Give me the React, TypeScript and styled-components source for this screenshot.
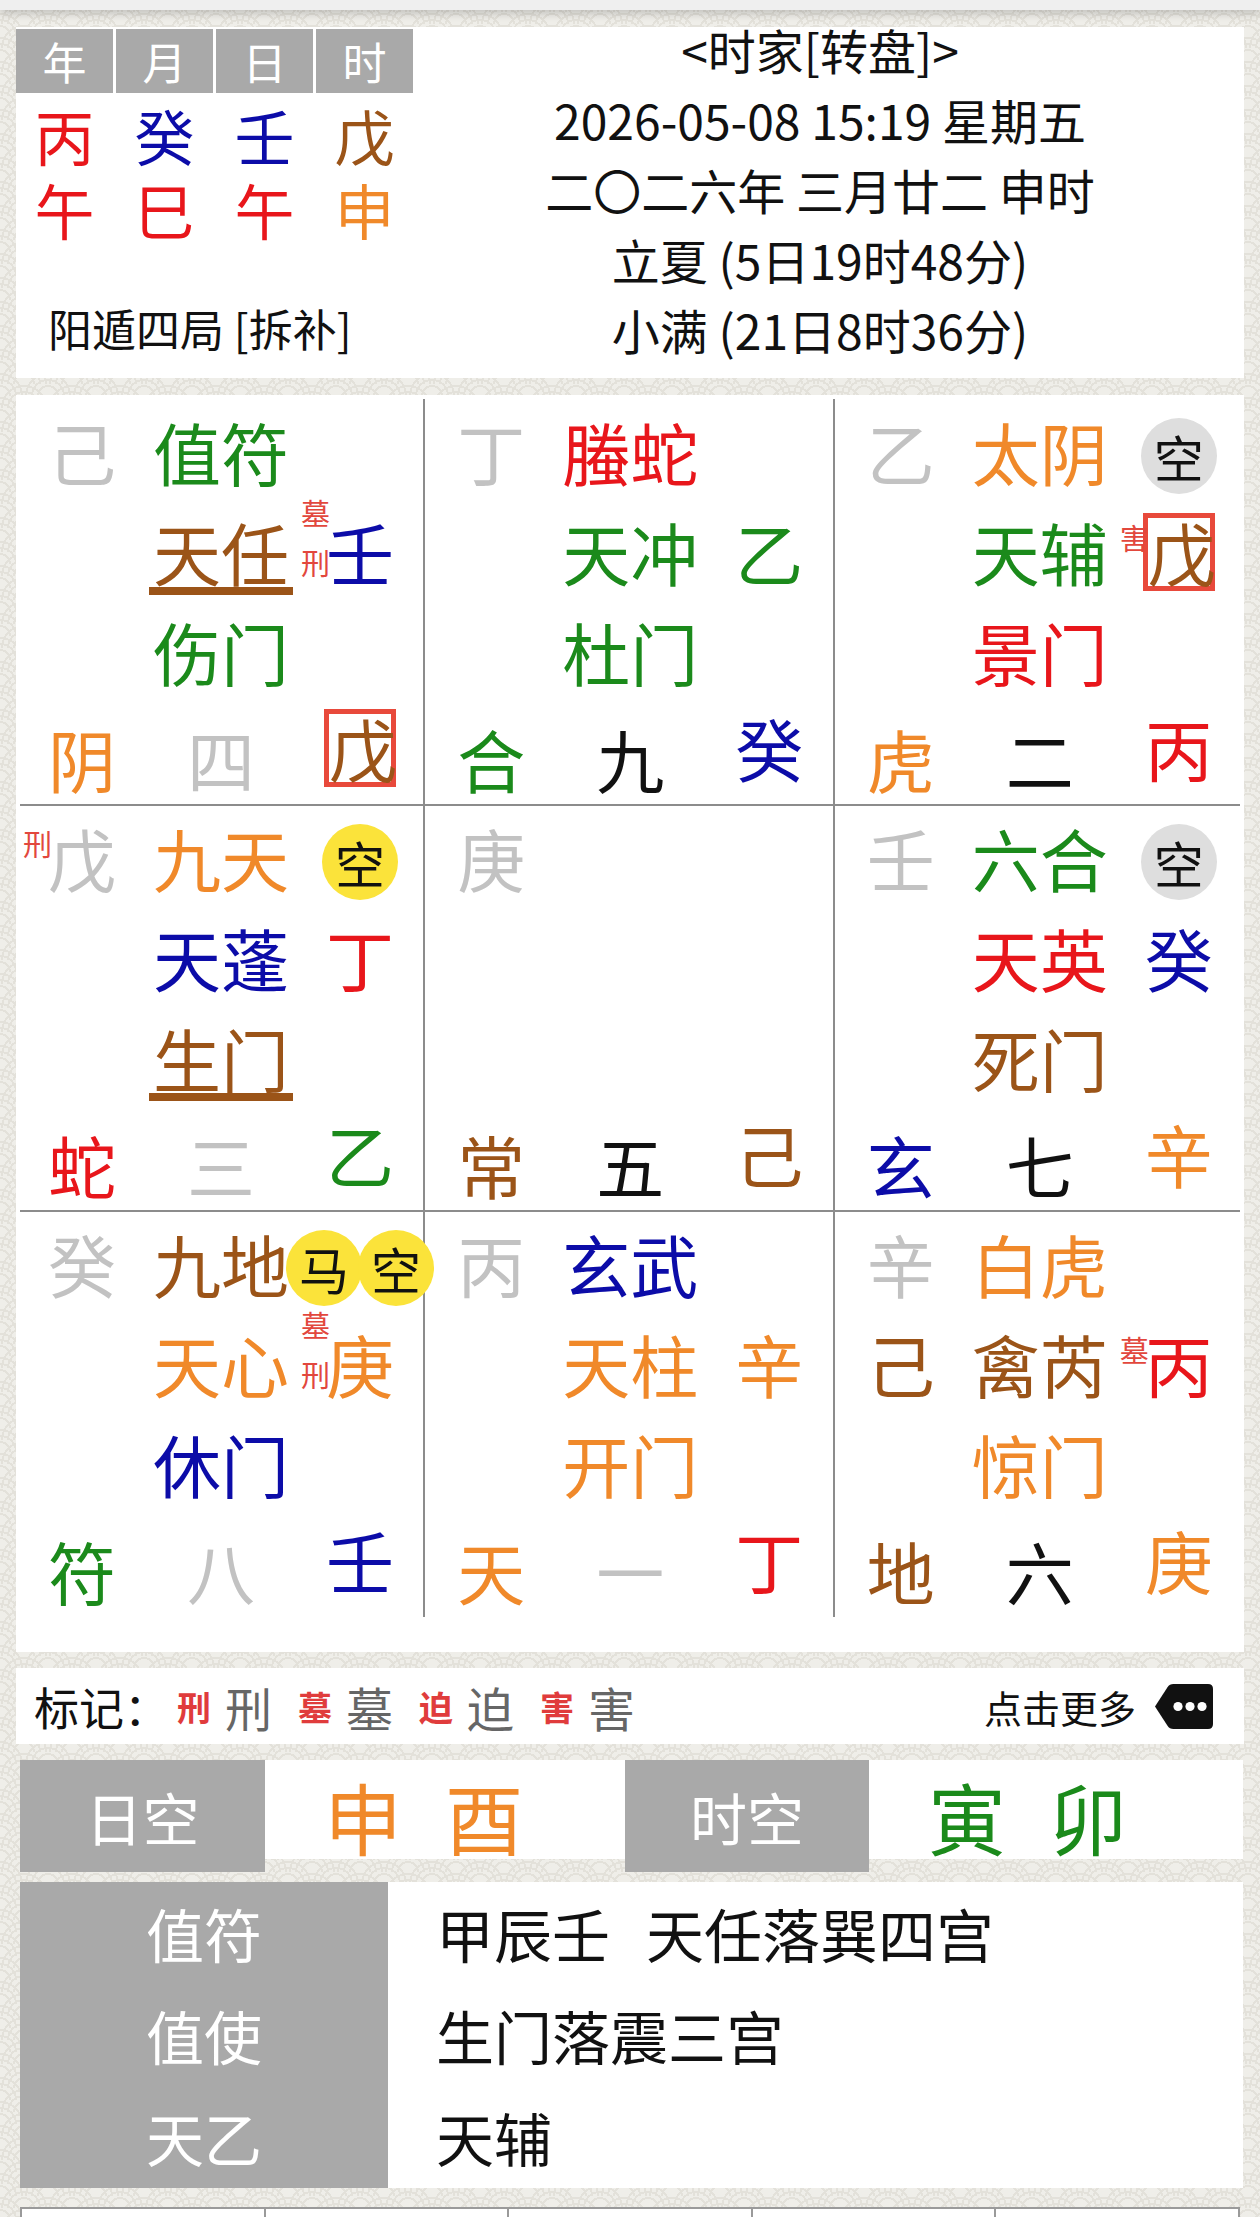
import React from "react";
import styled, { createGlobalStyle, css } from "styled-components";

const C = {
  green: "#1b8a1b",
  red: "#e8161b",
  blue: "#0c0ca8",
  brown: "#9b5418",
  orange: "#f0892a",
  gray: "#c2c2c2",
  black: "#111111",
  mark: "#e2473d",
};

type Tone = keyof typeof C;

const GlobalStyle = createGlobalStyle`
  html, body { margin: 0; padding: 0; }
  body {
    font-family: "Noto Sans CJK SC", "Noto Sans", sans-serif;
    color: #111;
    background-color: #efeee9;
    background-image:
      radial-gradient(circle at 50% 100%, transparent 0 9px, #e3e1da 9px 11px, transparent 11px 15px, #e3e1da 15px 17px, transparent 17px 21px, #e3e1da 21px 23px, transparent 23px),
      radial-gradient(circle at 50% 100%, transparent 0 9px, #e3e1da 9px 11px, transparent 11px 15px, #e3e1da 15px 17px, transparent 17px 21px, #e3e1da 21px 23px, transparent 23px);
    background-size: 48px 24px;
    background-position: 0 0, 24px 12px;
  }
`;

const TopBar = styled.div`
  height: 10px;
  background: #efefef;
  box-shadow: 0 3px 10px rgba(0, 0, 0, 0.22);
`;

const Page = styled.div`
  padding: 17px 16px 0;
`;

const Panel = styled.div`
  background: #ffffff;
`;

/* ---------- header ---------- */

const HeaderPanel = styled(Panel)`
  display: flex;
  height: 351px;
`;

const PillarBlock = styled.div`
  width: 400px;
`;

const PillarGrid = styled.div<{ $head?: boolean }>`
  display: grid;
  grid-template-columns: repeat(4, 97px);
  column-gap: 3px;
  ${({ $head }) =>
    $head
      ? css`
          margin-top: 2px;
          height: 59px;
          font-size: 44px;
        `
      : css`
          height: 74px;
          font-size: 60px;
        `}
`;

const HeadCell = styled.div`
  background: #a9a9a9;
  color: #fff;
  display: flex;
  align-items: center;
  justify-content: center;
`;

const PillarChar = styled.div<{ $c: Tone }>`
  display: flex;
  align-items: center;
  justify-content: center;
  line-height: 1;
  color: ${({ $c }) => C[$c]};
`;

const StemRows = styled.div`
  margin-top: 10px;
`;

const JuLine = styled.div`
  margin-top: 52px;
  padding-left: 32px;
  font-size: 44px;
  line-height: 60px;
`;

const DateBlock = styled.div`
  flex: 1;
  display: flex;
  flex-direction: column;
  align-items: center;
  gap: 26px;
  padding-right: 20px;
  font-size: 48px;
  line-height: 44px;
  white-space: nowrap;
`;

/* ---------- palace grid ---------- */

const BoardPanel = styled(Panel)`
  margin-top: 17px;
  padding: 4px 0 35px;
  display: grid;
  grid-template-columns: repeat(3, 1fr);
`;

const Palace = styled.div<{ $col: number; $row: number }>`
  position: relative;
  height: 406px;
  box-sizing: border-box;
  padding-top: 3px;
  ${({ $col }) => $col < 2 && css`border-right: 2px solid #8c8c8c;`}
  ${({ $row, $col }) =>
    $row < 2 &&
    css`
      &::after {
        content: "";
        position: absolute;
        bottom: -1px;
        height: 2px;
        left: ${$col === 0 ? "4px" : "0"};
        right: ${$col === 2 ? "4px" : "0"};
        background: #8c8c8c;
      }
    `}
`;

const PalaceRow = styled.div<{ $bottom?: boolean }>`
  display: grid;
  grid-template-columns: 68px 136px 68px;
  column-gap: 37px;
  padding-left: 32px;
  height: 100px;
  margin-top: ${({ $bottom }) => ($bottom ? "7px" : "0")};
`;

const Slot = styled.div<{ $c?: Tone; $lift?: boolean; $under?: boolean }>`
  position: relative;
  display: flex;
  align-items: center;
  justify-content: center;
  height: 100px;
  font-size: 68px;
  line-height: 1;
  white-space: nowrap;
  color: ${({ $c }) => ($c ? C[$c] : "inherit")};
  ${({ $lift }) => $lift && css`transform: translateY(-11px);`}
  ${({ $under }) =>
    $under &&
    css`
      &::after {
        content: "";
        position: absolute;
        left: -4px;
        right: -4px;
        top: 85px;
        height: 8px;
        background: ${C.brown};
      }
    `}
`;

const Boxed = styled.span`
  display: block;
  width: 72px;
  height: 78px;
  box-sizing: border-box;
  border: 5px solid #e8493b;
  line-height: 68px;
  text-align: center;
`;

const Marks = styled.div`
  position: absolute;
  right: calc(100% - 4px);
  top: 35px;
  transform: translateY(-50%);
  display: flex;
  flex-direction: column;
  gap: 22px;
  font-size: 29px;
  line-height: 28px;
  color: ${C.mark};
`;

const Badges = styled.div`
  display: flex;
  justify-content: center;
  width: 100%;
  transform: translateY(4px);
`;

const Badge = styled.div<{ $yellow?: boolean }>`
  flex-shrink: 0;
  width: 76px;
  height: 76px;
  border-radius: 50%;
  background: ${({ $yellow }) => ($yellow ? "#fbe33a" : "#dedede")};
  color: #111;
  font-size: 50px;
  line-height: 76px;
  text-align: center;
  & + & {
    margin-left: -4px;
  }
`;

/* ---------- marks legend ---------- */

const LegendPanel = styled(Panel)`
  margin-top: 16px;
  height: 76px;
  display: flex;
  align-items: center;
  justify-content: space-between;
  padding: 0 31px 0 18px;
`;

const LegendList = styled.div`
  display: flex;
  align-items: center;
  font-size: 45px;
`;

const LegendPair = styled.div`
  display: flex;
  align-items: center;
  gap: 14px;
  margin-left: 26px;
  &:first-of-type {
    margin-left: 8px;
  }
`;

const RedMark = styled.span`
  font-size: 34px;
  font-weight: 700;
  color: #e03c3c;
`;

const GrayMark = styled.span`
  font-size: 47px;
  color: #666;
`;

const MoreLink = styled.div`
  display: flex;
  align-items: center;
  gap: 17px;
  font-size: 38px;
`;

/* ---------- void row ---------- */

const VoidRow = styled(Panel)`
  margin: 16px 1px 0 4px;
  height: 99px;
  display: grid;
  grid-template-columns: 245px 360px 244px 1fr;
`;

const GrayHead = styled.div`
  background: #a9a9a9;
  color: #fff;
  font-size: 57px;
  display: flex;
  align-items: center;
  justify-content: center;
`;

const VoidValue = styled.div<{ $c: Tone }>`
  display: flex;
  align-items: center;
  gap: 43px;
  padding-left: 59px;
  font-size: 78px;
  color: ${({ $c }) => C[$c]};
`;

/* ---------- info table ---------- */

const InfoPanel = styled(Panel)`
  margin: 23px 1px 0 4px;
  display: grid;
  grid-template-columns: 368px 1fr;
`;

const InfoKeys = styled.div`
  background: #a9a9a9;
  color: #fff;
`;

const InfoLine = styled.div<{ $value?: boolean }>`
  height: 102px;
  display: flex;
  align-items: center;
  font-size: 58px;
  justify-content: ${({ $value }) => ($value ? "flex-start" : "center")};
  padding-left: ${({ $value }) => ($value ? "48px" : "0")};
  gap: 36px;
`;

const FootTable = styled.div`
  margin: 19px 4px 0;
  display: grid;
  grid-template-columns: repeat(5, 1fr);
  border-top: 2px solid #9a9a9a;
  border-left: 2px solid #9a9a9a;
`;

const FootCell = styled.div`
  height: 80px;
  background: #fff;
  border-right: 2px solid #9a9a9a;
`;

/* ---------- data ---------- */

type Glyph = { t: string; c: Tone; marks?: string[]; boxed?: boolean; under?: boolean };
type PalaceData = {
  stem?: Glyph;
  god?: Glyph;
  badges?: { t: string; y?: boolean }[];
  lodge?: Glyph;
  star?: Glyph;
  heaven?: Glyph;
  door?: Glyph;
  spirit?: Glyph;
  num?: Glyph;
  earth?: Glyph;
};

const palaces: PalaceData[] = [
  {
    stem: { t: "己", c: "gray" },
    god: { t: "值符", c: "green" },
    star: { t: "天任", c: "brown", under: true },
    heaven: { t: "壬", c: "blue", marks: ["墓", "刑"] },
    door: { t: "伤门", c: "green" },
    spirit: { t: "阴", c: "orange" },
    num: { t: "四", c: "gray" },
    earth: { t: "戊", c: "brown", boxed: true },
  },
  {
    stem: { t: "丁", c: "gray" },
    god: { t: "螣蛇", c: "red" },
    star: { t: "天冲", c: "green" },
    heaven: { t: "乙", c: "green" },
    door: { t: "杜门", c: "green" },
    spirit: { t: "合", c: "green" },
    num: { t: "九", c: "black" },
    earth: { t: "癸", c: "blue" },
  },
  {
    stem: { t: "乙", c: "gray" },
    god: { t: "太阴", c: "orange" },
    badges: [{ t: "空" }],
    star: { t: "天辅", c: "green" },
    heaven: { t: "戊", c: "brown", boxed: true, marks: ["害"] },
    door: { t: "景门", c: "red" },
    spirit: { t: "虎", c: "orange" },
    num: { t: "二", c: "black" },
    earth: { t: "丙", c: "red" },
  },
  {
    stem: { t: "戊", c: "gray", marks: ["刑"] },
    god: { t: "九天", c: "orange" },
    badges: [{ t: "空", y: true }],
    star: { t: "天蓬", c: "blue" },
    heaven: { t: "丁", c: "red" },
    door: { t: "生门", c: "brown", under: true },
    spirit: { t: "蛇", c: "red" },
    num: { t: "三", c: "gray" },
    earth: { t: "乙", c: "green" },
  },
  {
    stem: { t: "庚", c: "gray" },
    spirit: { t: "常", c: "brown" },
    num: { t: "五", c: "black" },
    earth: { t: "己", c: "brown" },
  },
  {
    stem: { t: "壬", c: "gray" },
    god: { t: "六合", c: "green" },
    badges: [{ t: "空" }],
    star: { t: "天英", c: "red" },
    heaven: { t: "癸", c: "blue" },
    door: { t: "死门", c: "brown" },
    spirit: { t: "玄", c: "blue" },
    num: { t: "七", c: "black" },
    earth: { t: "辛", c: "orange" },
  },
  {
    stem: { t: "癸", c: "gray" },
    god: { t: "九地", c: "brown" },
    badges: [
      { t: "马", y: true },
      { t: "空", y: true },
    ],
    star: { t: "天心", c: "orange" },
    heaven: { t: "庚", c: "orange", marks: ["墓", "刑"] },
    door: { t: "休门", c: "blue" },
    spirit: { t: "符", c: "green" },
    num: { t: "八", c: "gray" },
    earth: { t: "壬", c: "blue" },
  },
  {
    stem: { t: "丙", c: "gray" },
    god: { t: "玄武", c: "blue" },
    star: { t: "天柱", c: "orange" },
    heaven: { t: "辛", c: "orange" },
    door: { t: "开门", c: "orange" },
    spirit: { t: "天", c: "orange" },
    num: { t: "一", c: "gray" },
    earth: { t: "丁", c: "red" },
  },
  {
    stem: { t: "辛", c: "gray" },
    god: { t: "白虎", c: "orange" },
    lodge: { t: "己", c: "brown" },
    star: { t: "禽芮", c: "brown" },
    heaven: { t: "丙", c: "red", marks: ["墓"] },
    door: { t: "惊门", c: "orange" },
    spirit: { t: "地", c: "brown" },
    num: { t: "六", c: "black" },
    earth: { t: "庚", c: "orange" },
  },
];

const pillars: { stem: [string, Tone]; branch: [string, Tone] }[] = [
  { stem: ["丙", "red"], branch: ["午", "red"] },
  { stem: ["癸", "blue"], branch: ["巳", "red"] },
  { stem: ["壬", "blue"], branch: ["午", "red"] },
  { stem: ["戊", "brown"], branch: ["申", "orange"] },
];

const GlyphSlot = ({ g, lift }: { g?: Glyph; lift?: boolean }) => (
  <Slot $c={g?.c} $lift={lift} $under={g?.under}>
    {g?.marks && (
      <Marks>
        {g.marks.map((m) => (
          <span key={m}>{m}</span>
        ))}
      </Marks>
    )}
    {g ? g.boxed ? <Boxed>{g.t}</Boxed> : g.t : null}
  </Slot>
);

const MoreIcon = () => (
  <svg width="60" height="45" viewBox="0 0 60 45">
    <path
      d="M2 22.5 L14.5 3.2 Q16.6 0 20.4 0 L55 0 Q60 0 60 5 L60 40 Q60 45 55 45 L20.4 45 Q16.6 45 14.5 41.8 Z"
      fill="#111"
    />
    <circle cx="25" cy="22.5" r="4.6" fill="#fff" />
    <circle cx="37" cy="22.5" r="4.6" fill="#fff" />
    <circle cx="49" cy="22.5" r="4.6" fill="#fff" />
  </svg>
);

const legend = ["刑", "墓", "迫", "害"];

export default function App() {
  return (
    <>
      <GlobalStyle />
      <TopBar />
      <Page>
        <HeaderPanel>
          <PillarBlock>
            <PillarGrid $head>
              {["年", "月", "日", "时"].map((h) => (
                <HeadCell key={h}>{h}</HeadCell>
              ))}
            </PillarGrid>
            <StemRows>
              <PillarGrid>
                {pillars.map((p, i) => (
                  <PillarChar key={i} $c={p.stem[1]}>
                    {p.stem[0]}
                  </PillarChar>
                ))}
              </PillarGrid>
              <PillarGrid>
                {pillars.map((p, i) => (
                  <PillarChar key={i} $c={p.branch[1]}>
                    {p.branch[0]}
                  </PillarChar>
                ))}
              </PillarGrid>
            </StemRows>
            <JuLine>阳遁四局 [拆补]</JuLine>
          </PillarBlock>
          <DateBlock>
            <div>&lt;时家[转盘]&gt;</div>
            <div>2026-05-08 15:19 星期五</div>
            <div>二〇二六年 三月廿二 申时</div>
            <div>立夏 (5日19时48分)</div>
            <div>小满 (21日8时36分)</div>
          </DateBlock>
        </HeaderPanel>

        <BoardPanel>
          {palaces.map((p, i) => (
            <Palace key={i} $col={i % 3} $row={Math.floor(i / 3)}>
              <PalaceRow>
                <GlyphSlot g={p.stem} />
                <GlyphSlot g={p.god} />
                <Slot>
                  {p.badges && (
                    <Badges>
                      {p.badges.map((b) => (
                        <Badge key={b.t} $yellow={b.y}>
                          {b.t}
                        </Badge>
                      ))}
                    </Badges>
                  )}
                </Slot>
              </PalaceRow>
              <PalaceRow>
                <GlyphSlot g={p.lodge} />
                <GlyphSlot g={p.star} />
                <GlyphSlot g={p.heaven} />
              </PalaceRow>
              <PalaceRow>
                <Slot />
                <GlyphSlot g={p.door} />
                <Slot />
              </PalaceRow>
              <PalaceRow $bottom>
                <GlyphSlot g={p.spirit} />
                <GlyphSlot g={p.num} />
                <GlyphSlot g={p.earth} lift />
              </PalaceRow>
            </Palace>
          ))}
        </BoardPanel>

        <LegendPanel>
          <LegendList>
            <span>标记：</span>
            {legend.map((m) => (
              <LegendPair key={m}>
                <RedMark>{m}</RedMark>
                <GrayMark>{m}</GrayMark>
              </LegendPair>
            ))}
          </LegendList>
          <MoreLink>
            <span>点击更多</span>
            <MoreIcon />
          </MoreLink>
        </LegendPanel>

        <VoidRow>
          <GrayHead>日空</GrayHead>
          <VoidValue $c="orange">
            <span>申</span>
            <span>酉</span>
          </VoidValue>
          <GrayHead>时空</GrayHead>
          <VoidValue $c="green">
            <span>寅</span>
            <span>卯</span>
          </VoidValue>
        </VoidRow>

        <InfoPanel>
          <InfoKeys>
            <InfoLine>值符</InfoLine>
            <InfoLine>值使</InfoLine>
            <InfoLine>天乙</InfoLine>
          </InfoKeys>
          <div>
            <InfoLine $value>
              <span>甲辰壬</span>
              <span>天任落巽四宫</span>
            </InfoLine>
            <InfoLine $value>生门落震三宫</InfoLine>
            <InfoLine $value>天辅</InfoLine>
          </div>
        </InfoPanel>

        <FootTable>
          {[0, 1, 2, 3, 4].map((k) => (
            <FootCell key={k} />
          ))}
        </FootTable>
      </Page>
    </>
  );
}
